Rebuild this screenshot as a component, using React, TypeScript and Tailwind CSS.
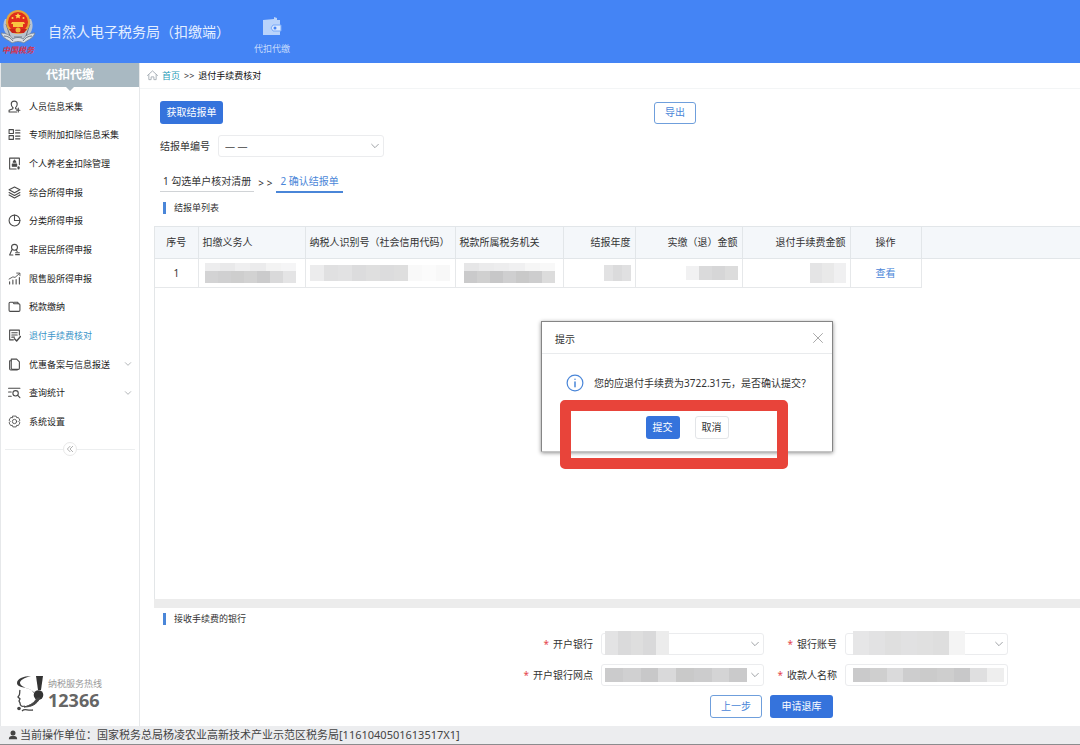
import React, { useState } from 'react';

type IconProps = { children: React.ReactNode; className?: string };

const Icon: React.FC<IconProps> = ({ children, className = 'size-3' }) => (
  <svg
    viewBox="0 0 24 24"
    fill="none"
    stroke="currentColor"
    strokeWidth="2"
    strokeLinecap="round"
    strokeLinejoin="round"
    aria-hidden="true"
    className={`shrink-0 ${className}`}
  >
    {children}
  </svg>
);

const Chevron: React.FC<{ className?: string }> = ({ className = 'size-3' }) => (
  <Icon className={`text-[#8b8f94] ${className}`}>
    <path d="M4 8l8 8 8-8" />
  </Icon>
);

type MenuItem = { label: string; icon: React.ReactNode; expandable?: boolean };

const MENU: MenuItem[] = [
  {
    label: '人员信息采集',
    icon: (
      <>
        <path d="M9 14c-2-1.500-3-4-3-6.500C6 4 8.500 2 11.500 2S17 4 17 7.500c0 2.500-1 5-3 6.500v2l3 1" />
        <path d="M9 14v2l-7 3v3h14" />
        <path d="M19 15v7M16 19h6" />
      </>
    ),
  },
  {
    label: '专项附加扣除信息采集',
    icon: (
      <>
        <path d="M2 3h8v7H2zM2 14h8v7H2z" />
        <path d="M14 4h8M14 9h8M14 15h8M14 20h8" />
      </>
    ),
  },
  {
    label: '个人养老金扣除管理',
    icon: (
      <>
        <path d="M21 14V2H3v20h12" />
        <path d="M12 5.500l-2.500 4h5zM8 17v-4h8v4zM8 17h8" fill="currentColor" />
        <path d="M19.500 19v2" strokeWidth="4" />
      </>
    ),
  },
  {
    label: '综合所得申报',
    icon: (
      <>
        <path d="M12 2l10 5-10 5.500L2 7z" />
        <path d="M2 12l10 5.500L22 12" />
        <path d="M2 16.500L12 22l10-5.500" />
      </>
    ),
  },
  {
    label: '分类所得申报',
    icon: (
      <>
        <circle cx="12" cy="12" r="10" />
        <path d="M12 2v10h10" />
      </>
    ),
  },
  {
    label: '非居民所得申报',
    icon: (
      <>
        <circle cx="12" cy="8" r="5.500" />
        <path d="M7 13l-4 9M15 13.500l2 2M9 22h-5" />
        <path d="M14 18h7M14 21.500h7" />
      </>
    ),
  },
  {
    label: '限售股所得申报',
    icon: (
      <>
        <path d="M3 22v-4M9 22v-7M15 22v-8M21 22V10" />
        <path d="M2 13l7-4 4 1 8-7M16 2h6v5" strokeWidth="1.600" />
      </>
    ),
  },
  {
    label: '税款缴纳',
    icon: (
      <>
        <path d="M2 6a2 2 0 012-2h5l2 3h9a2 2 0 012 2v10a2 2 0 01-2 2H4a2 2 0 01-2-2z" />
        <path d="M11 4h7l1 3" />
      </>
    ),
  },
  {
    label: '退付手续费核对',
    icon: (
      <>
        <path d="M21 11V2H3v18h7" />
        <path d="M7 7h10M7 11h10M7 15h5" />
        <path d="M12 18l4 4 7-8" strokeWidth="2.600" />
      </>
    ),
  },
  {
    label: '优惠备案与信息报送',
    expandable: true,
    icon: (
      <>
        <path d="M6 2h10l5 5v12a2 2 0 01-2 2H8a2 2 0 01-2-2z" />
        <path d="M6 5H3v15a2 2 0 002 2h12" />
      </>
    ),
  },
  {
    label: '查询统计',
    expandable: true,
    icon: (
      <>
        <path d="M1 4h21M1 11h5M1 19h5" />
        <circle cx="14" cy="13.500" r="5" />
        <path d="M18 17.500l4 4" />
      </>
    ),
  },
  {
    label: '系统设置',
    icon: (
      <>
        <path d="M9 2h6l1 3 3-.500 3 5-2 2.500 2 2.500-3 5-3-.500-1 3H9l-1-3-3 .500-3-5L4 12 2 9.500l3-5L8 5z" strokeWidth="1.600" />
        <circle cx="12" cy="12" r="4" strokeWidth="1.600" />
      </>
    ),
  },
];

const Emblem: React.FC = () => (
  <svg viewBox="0 0 36 36" className="h-9 w-9" aria-hidden="true">
    <path d="M5 10C1 18 5 27 13 30h10c8-3 12-12 8-20" fill="#b9c3cf" />
    <path d="M1 24c5 0 9 2 12 6 3-2 7-2 10 0 3-4 7-6 12-6-2 6-8 7-11 10-4-2-8-2-12 0-3-3-9-4-11-10z" fill="#d9dee4" stroke="#76818e" strokeWidth="0.800" />
    <path d="M4 27c4 0 7 2 9 5M32 27c-4 0-7 2-9 5M6 15l4 12M30 15l-4 12M14 28h8" stroke="#6d7784" fill="none" />
    <circle cx="18" cy="13" r="12" fill="#e8a33a" />
    <circle cx="18" cy="13" r="10" fill="#e02d1c" />
    <path d="M18 4l1 2h2l-1.500 1.500.5 2-2-1-2 1 .5-2L15 6h2z" fill="#ffd54a" />
    <circle cx="12.500" cy="9" r="1" fill="#ffd54a" />
    <circle cx="23.500" cy="9" r="1" fill="#ffd54a" />
    <path d="M12 13h12l1 2H11zM13 15h10v3H13z" fill="#f9c440" />
    <path d="M9 20h18l-3 4H12z" fill="#c9241a" />
    <circle cx="18" cy="21" r="2.500" fill="#f2b53a" />
  </svg>
);

const HotlineLogo: React.FC = () => (
  <svg viewBox="0 0 28 38" className="h-[38px] w-7 shrink-0" aria-hidden="true">
    <path d="M15 1C7 1 1 4 1 8c0 6 13 3 16 9 1 1 2 2 2 4 1-8-14-7-15-13 0-3 4-5 11-7z" fill="#3a3a3a" />
    <path d="M20 1h7l-2 14h-3z" fill="#333" />
    <circle cx="22.500" cy="20" r="4.800" fill="#333" />
    <path d="M4 15c-1 3 1 4-2 7l2 2-1 2 1 2c0 3 2 4 5 3" fill="none" stroke="#444" strokeWidth="1.300" />
    <path d="M24 23c-3 6-8 9-16 9 7-2 10-4 13-9z" fill="#444" stroke="#444" />
    <path d="M6 36c3-3 5 0 11-1" fill="none" stroke="#444" strokeWidth="1.300" />
    <circle cx="3" cy="33.500" r="1.800" fill="#444" />
  </svg>
);

// blocked-out private value
const Mosaic: React.FC<{ shades: string[]; className?: string }> = ({ shades, className = '' }) => (
  <div aria-hidden="true" className={`pointer-events-none flex overflow-hidden ${className}`}>
    {shades.map((shade, i) => (
      <span key={i} className={`h-full flex-1 ${shade}`} />
    ))}
  </div>
);

const SectionTitle: React.FC<{ children: React.ReactNode }> = ({ children }) => (
  <h2 className="flex items-center gap-2 text-[9px] leading-3 text-[#333]">
    <span className="h-3 w-[3px] bg-[#4a86d8]" />
    {children}
  </h2>
);

type FieldProps = { id: string; label: string; select?: boolean; children?: React.ReactNode };

const Field: React.FC<FieldProps> = ({ id, label, select, children }) => (
  <div className="flex items-center gap-2">
    <label htmlFor={id} className="w-[73px] text-right text-[10px] leading-4 whitespace-nowrap text-[#333]">
      <span className="mr-1 text-[#e5484d]">*</span>
      {label}
    </label>
    <div className="relative w-[163px]">
      {select ? (
        <select id={id} className="block h-[22px] w-full appearance-none rounded-[3px] border border-[#ebecee] bg-white px-2 text-[10px]">
          <option></option>
        </select>
      ) : (
        <input id={id} type="text" className="block h-[22px] w-full rounded-[3px] border border-[#ebecee] bg-white px-2 text-[10px]" />
      )}
      {select && <Chevron className="pointer-events-none absolute top-1.5 right-1 size-2.5" />}
      {children}
    </div>
  </div>
);

const COLUMNS = [
  { title: '序号', style: 'w-[43px] text-center' },
  { title: '扣缴义务人', style: 'w-[107px] text-left' },
  { title: '纳税人识别号（社会信用代码）', style: 'w-[150px] text-left' },
  { title: '税款所属税务机关', style: 'w-[108px] text-left' },
  { title: '结报年度', style: 'w-[72px] text-right' },
  { title: '实缴（退）金额', style: 'w-[107px] text-right' },
  { title: '退付手续费金额', style: 'w-[108px] text-right' },
  { title: '操作', style: 'w-[71px] text-center' },
];

const CELL = 'h-[29px] border-r border-b border-[#e6e8ea] px-1';

const App: React.FC = () => {
  const [active, setActive] = useState('退付手续费核对');
  const [open, setOpen] = useState(true);

  return (
    <div className="relative flex min-h-screen flex-col bg-white font-['Noto_Sans','Noto_Sans_CJK_SC',sans-serif] text-[10px] text-[#333]">
      <header className="flex h-[63px] shrink-0 items-center bg-[#4484f5] text-[#e4efff]">
        <div className="flex w-9 flex-col items-center">
          <Emblem />
          <span className="text-[8px] leading-[10px] font-bold whitespace-nowrap text-[#d9334a] italic">中国税务</span>
        </div>
        <h1 className="ml-3 text-[14px] leading-5 whitespace-nowrap">自然人电子税务局（扣缴端）</h1>
        <button type="button" className="mt-2.5 ml-6 flex flex-col items-center gap-1 text-[#c4dafc]">
          <svg viewBox="0 0 20 20" className="size-5" aria-hidden="true">
            <path d="M1 3l11-1V0l3 1v2h3v15H1z" fill="#b9d3fb" />
            <path d="M11 8h8v6h-8l-2-3z" fill="#dbe9ff" stroke="#79a9f8" strokeWidth="1" />
            <circle cx="13" cy="11" r="1.500" fill="#4484f5" />
          </svg>
          <span className="text-[9px] leading-4">代扣代缴</span>
        </button>
      </header>

      <div className="flex flex-1">
        <aside className="flex w-[140px] shrink-0 flex-col border-x border-[#e6e8ea]">
          <div className="relative h-6 bg-[#a9b9c2] text-center text-[12px] leading-6 font-bold text-white">
            代扣代缴
            <span className="absolute top-full left-1/2 -translate-x-1/2 border-x-4 border-t-4 border-x-transparent border-t-[#a9b9c2]" />
          </div>
          <nav className="mt-[5px]">
            <ul className="grid h-[344px] grid-rows-12">
              {MENU.map((item) => (
                <li key={item.label} className="flex">
                  <button
                    type="button"
                    onClick={() => setActive(item.label)}
                    className="flex w-full items-center gap-2 px-[7px] text-left text-[9px] whitespace-nowrap"
                  >
                    <Icon className="size-[13px] text-[#4a4a4a]">{item.icon}</Icon>
                    <span className={item.label === active ? 'flex-1 text-[#3d96c9]' : 'flex-1 text-[#222]'}>
                      {item.label}
                    </span>
                    {item.expandable && <Chevron className="size-2" />}
                  </button>
                </li>
              ))}
            </ul>
          </nav>
          <div className="mt-1.5 flex items-center px-1">
            <span className="h-px flex-1 bg-[#eceeef]" />
            <button
              type="button"
              aria-label="收起"
              className="flex size-[14px] items-center justify-center rounded-full border border-[#e8e8e8] text-[#888]"
            >
              <Icon className="size-2">
                <path d="M12 4l-8 8 8 8M20 4l-8 8 8 8" />
              </Icon>
            </button>
            <span className="h-px flex-1 bg-[#eceeef]" />
          </div>
          <div className="mt-auto mb-[13px] flex items-center gap-1 pl-[15px]">
            <HotlineLogo />
            <div className="whitespace-nowrap">
              <div className="text-[9px] leading-3 text-[#999]">纳税服务热线</div>
              <div className="font-['Open_Sans',sans-serif] text-[18px] leading-5 font-bold text-[#666]">12366</div>
            </div>
          </div>
        </aside>

        <main className="flex min-w-0 flex-1 flex-col">
          <nav className="flex h-[26px] shrink-0 items-center border-b border-[#f3f5f6] pl-[7px] text-[9px] whitespace-nowrap">
            <Icon className="size-[11px] text-[#a5adb5]">
              <path d="M1 12L12 2l11 10M4 10v11h5v-6h6v6h5V10" />
            </Icon>
            <a href="#home" className="ml-1 text-[#1f9bb8]">
              首页
            </a>
            <span className="mx-1">&gt;&gt;</span>
            <span className="text-[#111]">退付手续费核对</span>
          </nav>

          <section className="mt-3 flex w-full max-w-[556px] items-center justify-between pl-5">
            <button type="button" className="h-[23px] w-[63px] rounded-[3px] bg-[#3573dc] text-[10px] whitespace-nowrap text-white">
              获取结报单
            </button>
            <button type="button" className="h-[22px] w-[42px] rounded-[3px] border border-[#6f9fdc] text-[10px] text-[#4a86d8]">
              导出
            </button>
          </section>

          <div className="mt-[11px] flex items-center gap-2 pl-5">
            <label htmlFor="report-no">结报单编号</label>
            <div className="relative w-[166px]">
              <select id="report-no" className="block h-[22px] w-full appearance-none rounded-[3px] border border-[#ebecee] bg-white px-1.5 text-[10px] text-[#666]">
                <option>— —</option>
              </select>
              <Chevron className="pointer-events-none absolute top-1.5 right-1 size-2.5" />
            </div>
          </div>

          <div className="mt-4 flex items-start gap-1 pl-5 leading-4 whitespace-nowrap">
            <span className="border-b border-[#d0d3d6] px-[3px] pb-0.5">1 勾选单户核对清册</span>
            <span className="pt-0.5">&gt; &gt;</span>
            <span className="border-b-2 border-[#4a86d8] px-1 pb-0.5 text-[#4a86d8]">2 确认结报单</span>
          </div>

          <div className="mt-[9px] pl-[23px]">
            <SectionTitle>结报单列表</SectionTitle>
          </div>

          <div className="mt-3 ml-[14px] flex-1 border-l border-[#e3e6e8]">
            <table className="w-full table-fixed border-collapse">
              <thead>
                <tr className="bg-[#f4f7fa]">
                  {COLUMNS.map((col) => (
                    <th
                      key={col.title}
                      className={`h-8 border-y border-r border-[#e2e6e9] px-1 font-normal whitespace-nowrap ${col.style}`}
                    >
                      {col.title}
                    </th>
                  ))}
                  <th className="border-y border-[#e2e6e9]" />
                </tr>
              </thead>
              <tbody>
                <tr>
                  <td className={`${CELL} text-center`}>1</td>
                  <td className={CELL}>
                    <div className="ml-0.5 w-[92px]">
                      <Mosaic className="h-2" shades={['bg-[#ededee]', 'bg-[#e9e9ea]', 'bg-[#efeff0]', 'bg-[#ebebec]', 'bg-[#f3f3f3]', 'bg-[#f5f5f6]']} />
                      <Mosaic className="h-3" shades={['bg-[#d3d3d4]', 'bg-[#d0d0d1]', 'bg-[#cecece]', 'bg-[#d2d2d2]', 'bg-[#cbcbcc]', 'bg-[#d9d9da]', 'bg-[#e4e4e5]']} />
                    </div>
                  </td>
                  <td className={CELL}>
                    <Mosaic className="h-4" shades={['bg-[#ececed]', 'bg-[#e0e0e1]', 'bg-[#e2e2e3]', 'bg-[#dcdcdd]', 'bg-[#dfdfdf]', 'bg-[#dcdcdd]', 'bg-[#dedede]', 'bg-[#f9f9f9]', 'bg-[#fbfbfb]', 'bg-[#f8f8f8]']} />
                  </td>
                  <td className={CELL}>
                    <div className="ml-1 w-[92px]">
                      <Mosaic className="h-2" shades={['bg-[#e6e6e7]', 'bg-[#ebebec]', 'bg-[#ededee]', 'bg-[#f0f0f1]', 'bg-[#f6f6f6]', 'bg-[#f8f8f8]']} />
                      <Mosaic className="h-3" shades={['bg-[#cacacb]', 'bg-[#d0d0d0]', 'bg-[#c7c7c8]', 'bg-[#cfcfd0]', 'bg-[#c9c9c9]', 'bg-[#cdcdce]', 'bg-[#dcdcdc]']} />
                    </div>
                  </td>
                  <td className={CELL}>
                    <Mosaic className="ml-auto h-4 w-[27px]" shades={['bg-[#e2e2e3]', 'bg-[#dbdbdc]', 'bg-[#e0e0e1]']} />
                  </td>
                  <td className={CELL}>
                    <Mosaic className="ml-auto h-[14px] w-[52px]" shades={['bg-[#f1f1f2]', 'bg-[#dadadb]', 'bg-[#d6d6d7]', 'bg-[#dcdcdc]']} />
                  </td>
                  <td className={CELL}>
                    <Mosaic className="ml-auto h-5 w-9" shades={['bg-[#e4e4e5]', 'bg-[#e9e9e9]', 'bg-[#f0f0f1]']} />
                  </td>
                  <td className={`${CELL} text-center`}>
                    <a href="#detail" className="text-[#4a86d8]">
                      查看
                    </a>
                  </td>
                  <td />
                </tr>
              </tbody>
            </table>
          </div>

          <div className="ml-[14px] h-[9px] bg-[#ececec]" />

          <form onSubmit={(e) => e.preventDefault()} className="pt-[5px] pb-2">
            <div className="pl-[23px]">
              <SectionTitle>接收手续费的银行</SectionTitle>
            </div>
            <div className="mt-2 mr-[72px] grid grid-cols-[auto_auto] justify-end gap-y-[9px]">
              <Field id="bank" label="开户银行" select>
                <Mosaic className="absolute -top-0.5 left-1 h-6 w-16" shades={['bg-[#e3e3e4]', 'bg-[#dadadb]', 'bg-[#dedede]', 'bg-[#d9d9da]', 'bg-[#ececec]']} />
              </Field>
              <Field id="account" label="银行账号" select>
                <Mosaic className="absolute -top-0.5 left-2 h-6 w-[112px]" shades={['bg-[#e6e6e7]', 'bg-[#e2e2e3]', 'bg-[#dfdfdf]', 'bg-[#e1e1e2]', 'bg-[#e0e0e0]', 'bg-[#dedede]', 'bg-[#f4f4f4]']} />
              </Field>
              <Field id="branch" label="开户银行网点" select>
                <Mosaic className="absolute top-1 left-1 h-[14px] w-[142px]" shades={['bg-[#cbcbcc]', 'bg-[#d0d0d1]', 'bg-[#c8c8c9]', 'bg-[#d9d9da]', 'bg-[#c9c9c9]', 'bg-[#cccccd]', 'bg-[#d4d4d5]', 'bg-[#cacacb]']} />
              </Field>
              <Field id="payee" label="收款人名称">
                <Mosaic className="absolute top-1 left-2 h-[14px] w-[151px]" shades={['bg-[#cacacb]', 'bg-[#cfcfcf]', 'bg-[#dadadb]', 'bg-[#cdcdce]', 'bg-[#cbcbcb]', 'bg-[#cecece]', 'bg-[#c8c8c9]', 'bg-[#dfdfe0]', 'bg-[#eeeeee]']} />
              </Field>
            </div>
            <div className="mt-[9px] mr-[247px] flex justify-end gap-2">
              <button type="button" className="h-[23px] w-[52px] rounded-[3px] border border-[#6f9fdc] text-[#4a86d8]">
                上一步
              </button>
              <button type="submit" className="h-[23px] w-[63px] rounded-[3px] bg-[#3573dc] text-white">
                申请退库
              </button>
            </div>
          </form>
        </main>
      </div>

      <footer className="flex h-[19px] shrink-0 items-center gap-0.5 border-b border-[#8c8c8e] bg-[#ecedef] pl-2 text-[11px] whitespace-nowrap text-[#444]">
        <svg viewBox="0 0 12 12" className="size-[10px] shrink-0" fill="#444" aria-hidden="true">
          <circle cx="6" cy="3.500" r="3" />
          <path d="M1 11c0-3 2-4 5-4s5 1 5 4z" />
        </svg>
        <span>当前操作单位：国家税务总局杨凌农业高新技术产业示范区税务局[1161040501613517X1]</span>
      </footer>

      {open && (
        <div
          role="dialog"
          aria-labelledby="dialog-title"
          className="absolute top-[321px] left-[541px] w-[292px] border border-b-[#c4c4c4] border-[#858585] bg-white shadow-[0_1px_4px_rgba(0,0,0,0.45)]"
        >
          <div className="flex h-8 items-center justify-between border-b border-[#e9ebed] pr-2 pl-[13px]">
            <h3 id="dialog-title" className="pt-1">
              提示
            </h3>
            <button type="button" aria-label="关闭" onClick={() => setOpen(false)} className="text-[#aaa]">
              <Icon>
                <path d="M3 3l18 18M21 3L3 21" />
              </Icon>
            </button>
          </div>
          <div className="mt-5 flex items-center gap-2.5 pl-6 whitespace-nowrap">
            <Icon className="size-[18px] text-[#4a86d8]">
              <circle cx="12" cy="12" r="10.500" strokeWidth="1.600" />
              <path d="M12 10.500V17M12 7v.100" />
            </Icon>
            <p>您的应退付手续费为3722.31元，是否确认提交？</p>
          </div>
          <div className="mt-6 mb-3 flex justify-center gap-[15px]">
            <button type="button" className="h-[23px] w-[34px] rounded-[3px] bg-[#3573dc] text-white">
              提交
            </button>
            <button
              type="button"
              onClick={() => setOpen(false)}
              className="h-[23px] w-[34px] rounded-[3px] border border-[#e3e5e8]"
            >
              取消
            </button>
          </div>
        </div>
      )}
      <div className="pointer-events-none absolute top-[400px] left-[560px] h-[69px] w-[228px] rounded-[5px] border-[11px] border-[#e8443a]" />
    </div>
  );
};

export default App;
